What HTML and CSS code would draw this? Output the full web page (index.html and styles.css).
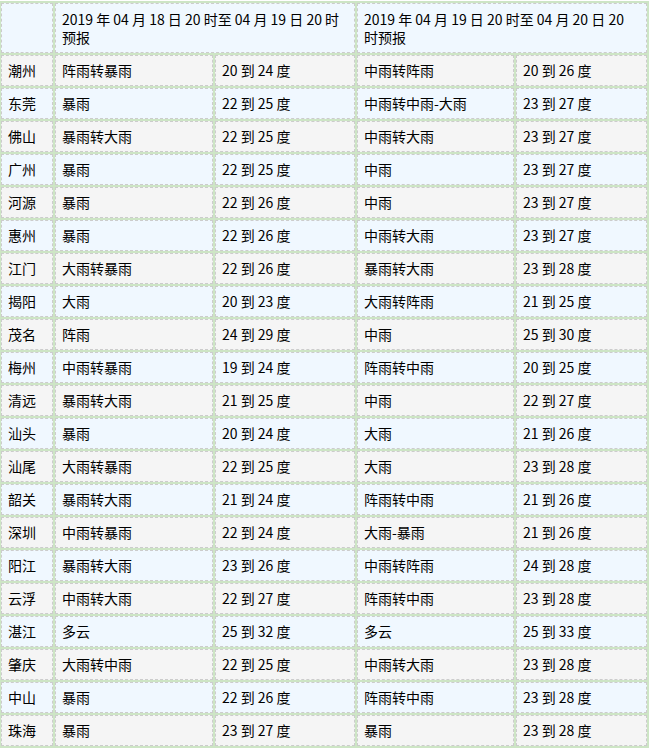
FILE: index.html
```html
<!DOCTYPE html>
<html lang="zh-CN">
<head>
<meta charset="utf-8">
<title>广东天气预报</title>
<link rel="stylesheet" href="styles.css">
</head>
<body>
<table class="forecast">
  <colgroup>
    <col class="c-city">
    <col class="c-w1">
    <col class="c-t1">
    <col class="c-w2">
    <col class="c-t2">
  </colgroup>
  <thead>
    <tr>
      <th></th>
      <th colspan="2">2019 年 04 月 18 日 20 时至 04 月 19 日 20 时预报</th>
      <th colspan="2">2019 年 04 月 19 日 20 时至 04 月 20 日 20 时预报</th>
    </tr>
  </thead>
  <tbody>
    <tr><td>潮州</td><td>阵雨转暴雨</td><td>20 到 24 度</td><td>中雨转阵雨</td><td>20 到 26 度</td></tr>
    <tr><td>东莞</td><td>暴雨</td><td>22 到 25 度</td><td>中雨转中雨-大雨</td><td>23 到 27 度</td></tr>
    <tr><td>佛山</td><td>暴雨转大雨</td><td>22 到 25 度</td><td>中雨转大雨</td><td>23 到 27 度</td></tr>
    <tr><td>广州</td><td>暴雨</td><td>22 到 25 度</td><td>中雨</td><td>23 到 27 度</td></tr>
    <tr><td>河源</td><td>暴雨</td><td>22 到 26 度</td><td>中雨</td><td>23 到 27 度</td></tr>
    <tr><td>惠州</td><td>暴雨</td><td>22 到 26 度</td><td>中雨转大雨</td><td>23 到 27 度</td></tr>
    <tr><td>江门</td><td>大雨转暴雨</td><td>22 到 26 度</td><td>暴雨转大雨</td><td>23 到 28 度</td></tr>
    <tr><td>揭阳</td><td>大雨</td><td>20 到 23 度</td><td>大雨转阵雨</td><td>21 到 25 度</td></tr>
    <tr><td>茂名</td><td>阵雨</td><td>24 到 29 度</td><td>中雨</td><td>25 到 30 度</td></tr>
    <tr><td>梅州</td><td>中雨转暴雨</td><td>19 到 24 度</td><td>阵雨转中雨</td><td>20 到 25 度</td></tr>
    <tr><td>清远</td><td>暴雨转大雨</td><td>21 到 25 度</td><td>中雨</td><td>22 到 27 度</td></tr>
    <tr><td>汕头</td><td>暴雨</td><td>20 到 24 度</td><td>大雨</td><td>21 到 26 度</td></tr>
    <tr><td>汕尾</td><td>大雨转暴雨</td><td>22 到 25 度</td><td>大雨</td><td>23 到 28 度</td></tr>
    <tr><td>韶关</td><td>暴雨转大雨</td><td>21 到 24 度</td><td>阵雨转中雨</td><td>21 到 26 度</td></tr>
    <tr><td>深圳</td><td>中雨转暴雨</td><td>22 到 24 度</td><td>大雨-暴雨</td><td>21 到 26 度</td></tr>
    <tr><td>阳江</td><td>暴雨转大雨</td><td>23 到 26 度</td><td>中雨转阵雨</td><td>24 到 28 度</td></tr>
    <tr><td>云浮</td><td>中雨转大雨</td><td>22 到 27 度</td><td>阵雨转中雨</td><td>23 到 28 度</td></tr>
    <tr><td>湛江</td><td>多云</td><td>25 到 32 度</td><td>多云</td><td>25 到 33 度</td></tr>
    <tr><td>肇庆</td><td>大雨转中雨</td><td>22 到 25 度</td><td>中雨转大雨</td><td>23 到 28 度</td></tr>
    <tr><td>中山</td><td>暴雨</td><td>22 到 26 度</td><td>阵雨转中雨</td><td>23 到 28 度</td></tr>
    <tr><td>珠海</td><td>暴雨</td><td>23 到 27 度</td><td>暴雨</td><td>23 到 28 度</td></tr>
  </tbody>
</table>
</body>
</html>
```

FILE: styles.css
```css
html, body {
  margin: 0;
  padding: 0;
  background: #ffffff;
}

.forecast {
  margin: 1px 0 0 -1px;
  width: 650px;
  table-layout: fixed;
  border-collapse: separate;
  border-spacing: 2px;
  background: #cde5c5;
  font-family: "Noto Sans CJK SC", "Noto Sans", sans-serif;
  font-size: 14px;
  color: #000;
}

.c-city { width: 52px; }
.c-w1 { width: 158px; }
.c-t1 { width: 140px; }
.c-w2 { width: 157px; }
.c-t2 { width: 131px; }

.forecast th,
.forecast td {
  border: 1px dashed #cccccc;
  text-align: left;
  vertical-align: middle;
  font-weight: normal;
  padding: 5px 6px;
  line-height: 19px;
  box-sizing: border-box;
}

.forecast th {
  background: #f0f8ff;
  height: 50px;
  padding: 6px 6px;
  line-height: 18px;
}

.forecast td {
  height: 31px;
}

.forecast tbody tr:nth-child(odd) td {
  background: #f5f5f5;
}

.forecast tbody tr:nth-child(even) td {
  background: #f0f8ff;
}
```
